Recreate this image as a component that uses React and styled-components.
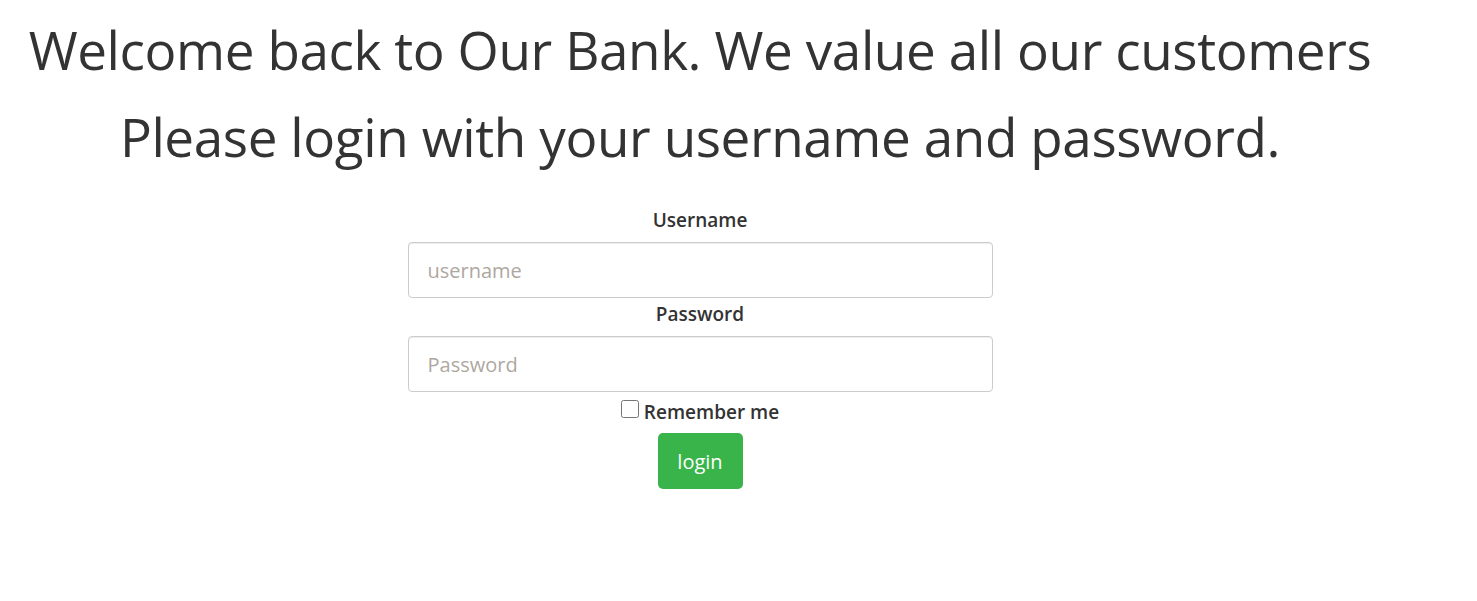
import React from "react";
import styled, { createGlobalStyle } from "styled-components";

const GlobalStyle = createGlobalStyle`
  body {
    margin: 0;
    background: #ffffff;
    color: #333333;
    font-family: "Open Sans", "Noto Sans", "Liberation Sans", sans-serif;
  }
`;

const Page = styled.div`
  width: 1400px;
  text-align: center;
  padding-top: 6px;
`;

const Title = styled.h1`
  margin: 0;
  font-size: 53px;
  font-weight: 400;
  letter-spacing: -0.4px;
  line-height: 87px;
  color: #333333;
`;

const Form = styled.form`
  width: 585px;
  margin: 28px auto 0;
  display: flex;
  flex-direction: column;
  align-items: center;
`;

const Label = styled.label`
  display: block;
  font-size: 19px;
  font-weight: 600;
  line-height: 24px;
  margin: ${(p) => (p.first ? "0" : "4px")} 0 10px;
`;

const Input = styled.input`
  box-sizing: border-box;
  width: 100%;
  height: 56px;
  padding: 0 19px;
  border: 1px solid #cccccc;
  border-radius: 4px;
  font-family: inherit;
  font-size: 20px;
  color: #333333;
  box-shadow: inset 0 1px 1px rgba(0, 0, 0, 0.075);

  &::placeholder {
    color: #aea79f;
  }
`;

const Remember = styled.label`
  display: flex;
  align-items: center;
  gap: 5px;
  margin-top: 8px;
  font-size: 19px;
  font-weight: 600;
  line-height: 24px;

  input {
    width: 18px;
    height: 18px;
    margin: 0;
    position: relative;
    top: -3px;
  }
`;

const Button = styled.button`
  margin-top: 9px;
  width: 85px;
  height: 56px;
  border: none;
  border-radius: 5px;
  background: #38b44a;
  color: #ffffff;
  font-family: inherit;
  font-size: 20px;
  cursor: pointer;
`;

export default function App() {
  return (
    <>
      <GlobalStyle />
      <Page>
        <Title>Welcome back to Our Bank. We value all our customers</Title>
        <Title>Please login with your username and password.</Title>
        <Form onSubmit={(e) => e.preventDefault()}>
          <Label first htmlFor="username">Username</Label>
          <Input id="username" type="text" placeholder="username" />
          <Label htmlFor="password">Password</Label>
          <Input id="password" type="password" placeholder="Password" />
          <Remember>
            <input type="checkbox" />
            Remember me
          </Remember>
          <Button type="submit">login</Button>
        </Form>
      </Page>
    </>
  );
}
